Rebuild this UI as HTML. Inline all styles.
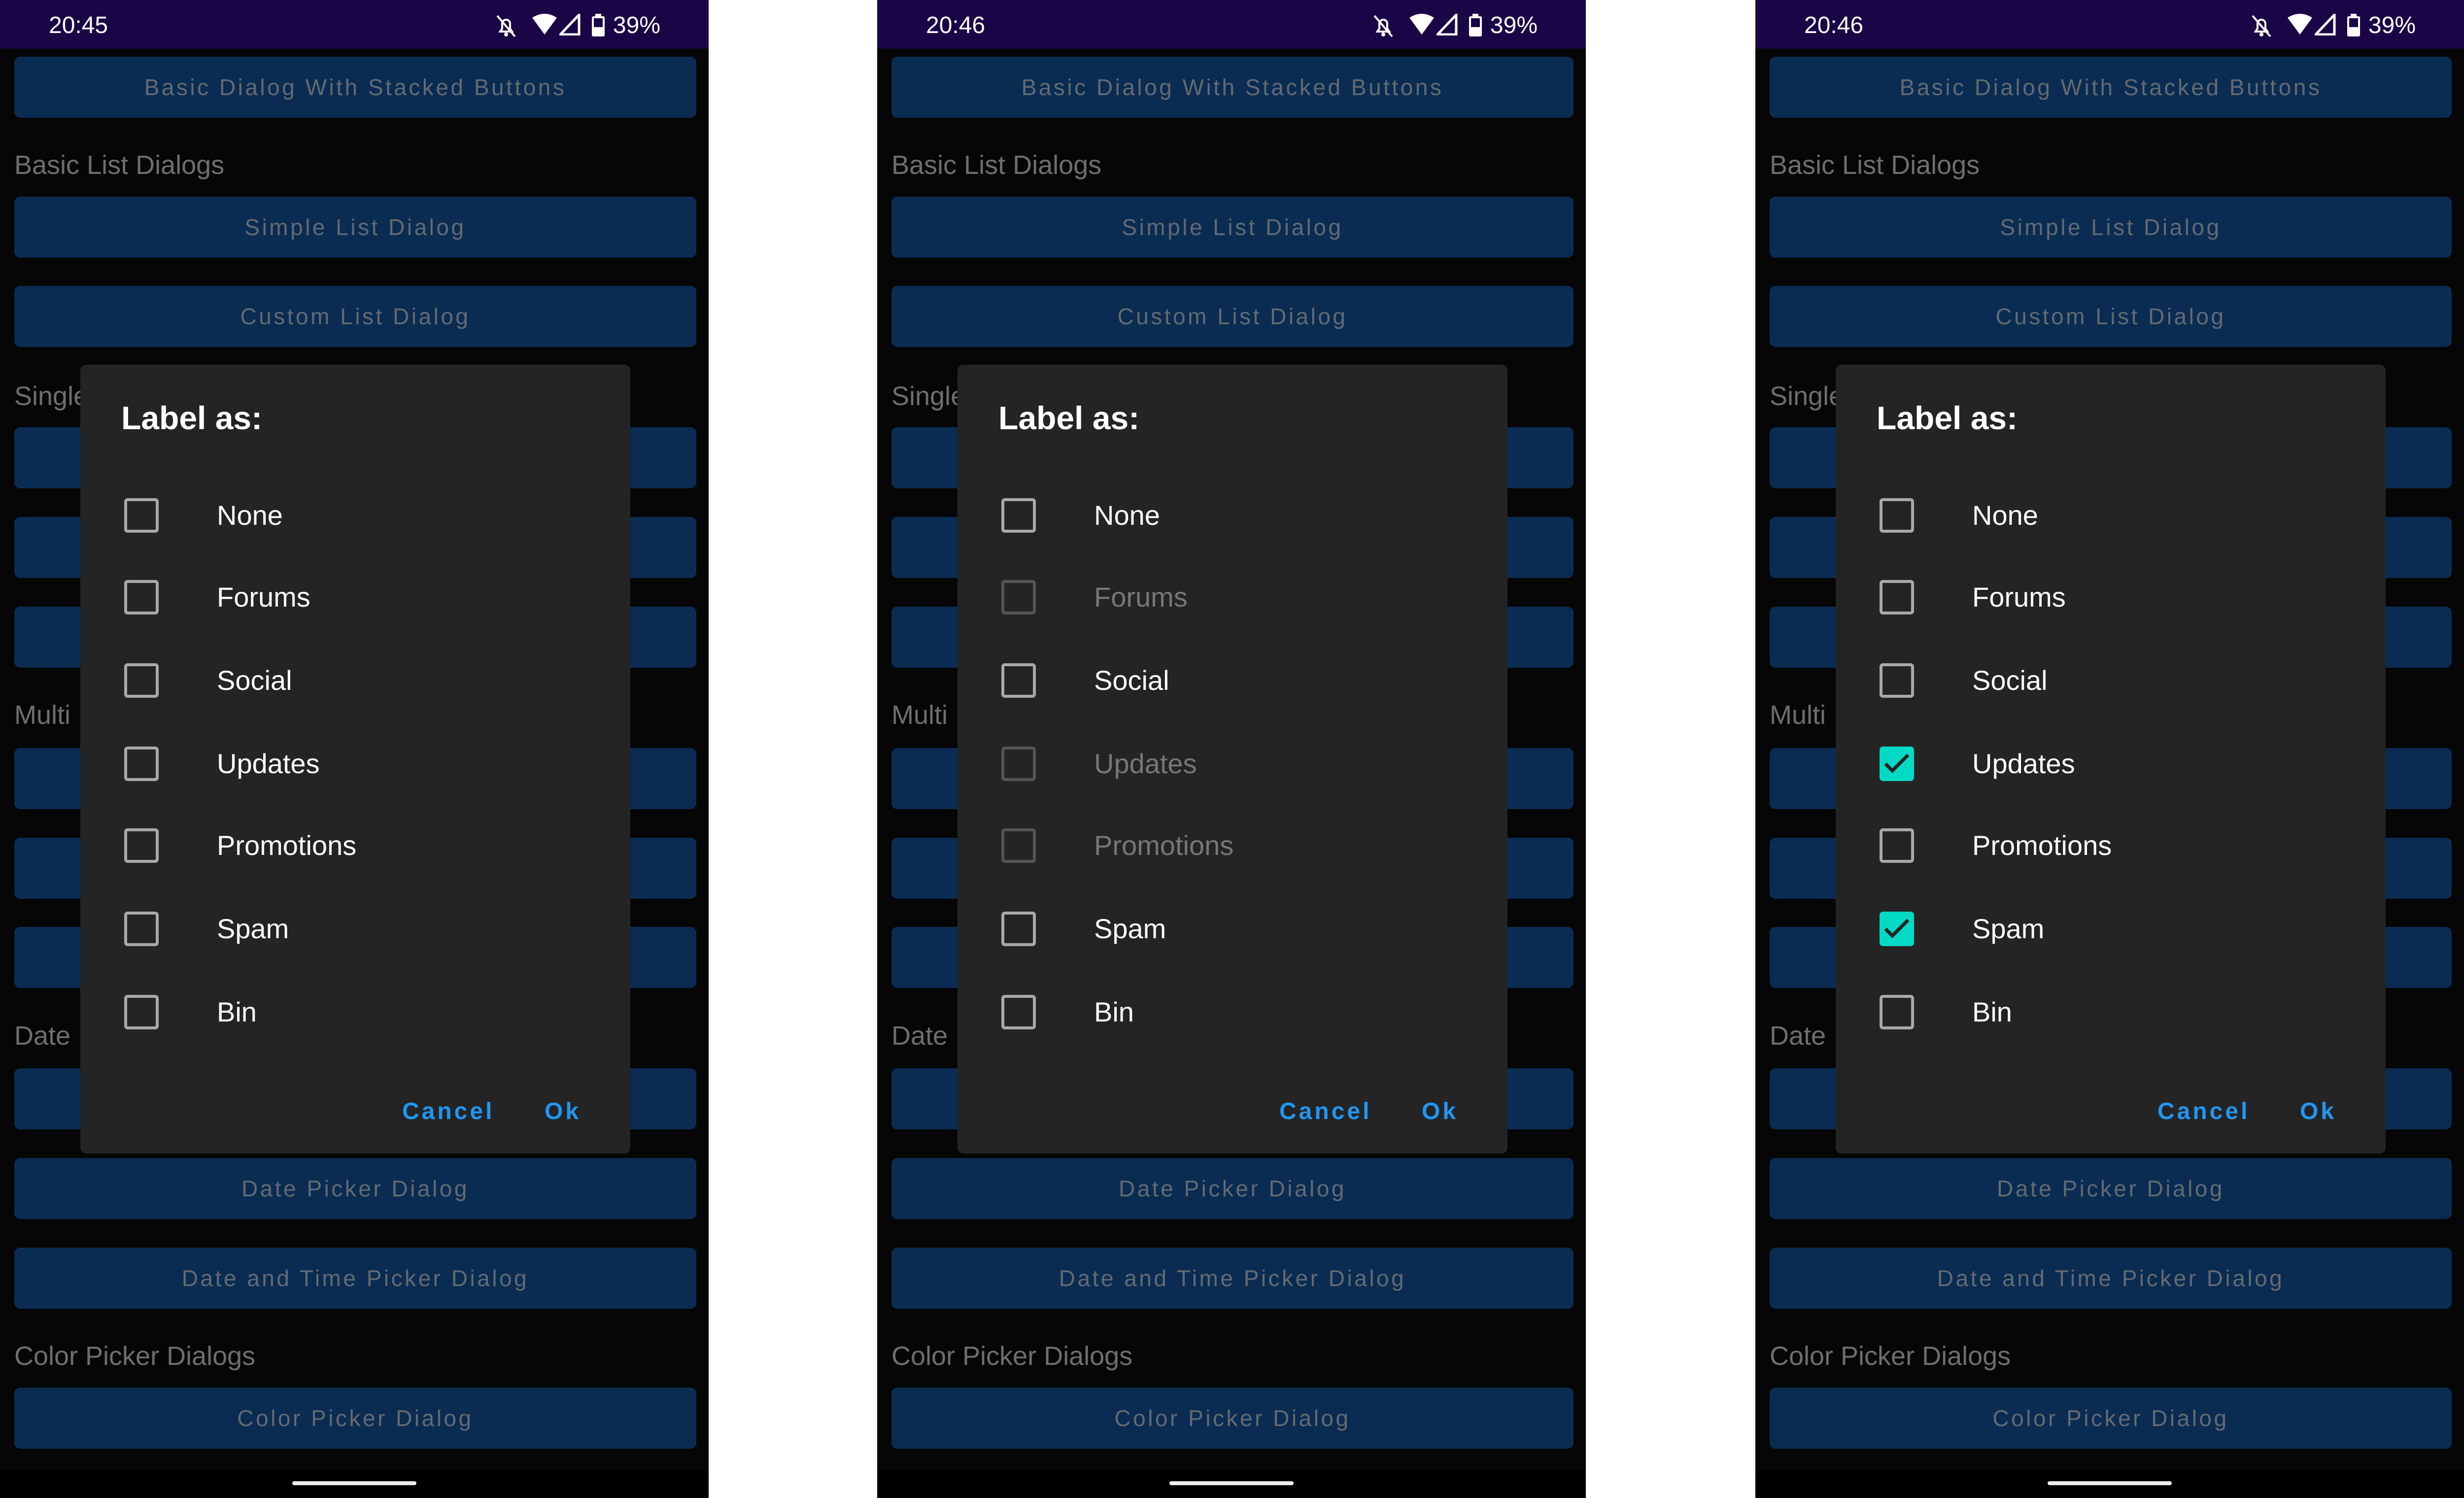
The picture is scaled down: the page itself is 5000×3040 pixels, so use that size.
<!DOCTYPE html>
<html><head><meta charset="utf-8"><style>
*{margin:0;padding:0;box-sizing:border-box}
body{width:5000px;height:3040px;background:#fff;position:relative;overflow:hidden;font-family:"Liberation Sans",sans-serif}
.ph{position:absolute;top:0;width:1438px;height:3040px;background:#060606;overflow:hidden}
.sb{position:absolute;left:0;top:0;width:100%;height:99px;background:#1a0646}
.tm{position:absolute;left:99px;top:24px;font-size:48px;color:#fff}
.pc{position:absolute;right:98px;top:24px;font-size:48px;color:#fff}
.ic{position:absolute;top:28px}
.btn{position:absolute;left:29px;width:1384px;height:124px;background:#0a2c52;border-radius:12px;color:#646a72;font-size:46px;letter-spacing:4.5px;text-align:center;line-height:124px;font-weight:500}
.lb{position:absolute;left:29px;font-size:54px;color:#6e6e6e;line-height:64px}
.nav{position:absolute;left:0;top:2982px;width:100%;height:58px;background:#000}
.hm{position:absolute;left:593px;top:3006px;width:252px;height:8px;border-radius:4px;background:#eee}
.dlg{position:absolute;left:163px;top:740px;width:1116px;height:1601px;background:#242424;border-radius:12px}
.tt{position:absolute;left:83px;top:70px;font-size:66px;color:#fff;font-weight:bold}
.it{position:absolute;left:0;width:100%;height:120px}
.cb{position:absolute;left:89px;top:25px;width:70px;height:70px;border:6px solid #a9a9a9;border-radius:7px}
.cb.d{border-color:#555}
.cb.c{background:#03dac5;border-color:#03dac5}
.tx{position:absolute;left:277px;top:30px;font-size:56px;color:#fff;line-height:60px}
.tx.d{color:#777}
.ab{position:absolute;top:1488px;font-size:48px;font-weight:bold;color:#2196f3;letter-spacing:5px}
</style></head><body>

<div class="ph" style="left:0">
<div class="sb"><div class="tm">20:45</div>
<svg class="ic" style="left:1005px" width="44" height="50" viewBox="0 0 44 50"><path d="M10 36h24l-4-6V20a8 8 0 0 0-16 0v10z" fill="none" stroke="#fff" stroke-width="4"/><path d="M4 4l36 42" stroke="#fff" stroke-width="4"/><circle cx="22" cy="42" r="4" fill="#fff"/></svg>
<svg class="ic" style="left:1080px" width="50" height="44" viewBox="0 0 50 44"><path d="M0 8Q25-8 50 8L25 42z" fill="#fff"/></svg>
<svg class="ic" style="left:1135px" width="44" height="44" viewBox="0 0 44 44"><path d="M40 2V42H2z" fill="none" stroke="#fff" stroke-width="5"/></svg>
<svg class="ic" style="left:1200px" width="28" height="46" viewBox="0 0 28 46"><rect x="1" y="5" width="26" height="41" rx="3" fill="#fff"/><rect x="8" y="0" width="12" height="6" fill="#fff"/><rect x="5" y="9" width="18" height="18" fill="#1a0646"/></svg>
<div class="pc">39%</div></div>
<div class="btn" style="top:115px">Basic Dialog With Stacked Buttons</div>
<div class="lb" style="top:303px">Basic List Dialogs</div>
<div class="btn" style="top:399px">Simple List Dialog</div>
<div class="btn" style="top:580px">Custom List Dialog</div>
<div class="lb" style="top:772px">Single</div>
<div class="btn" style="top:867px"></div><div class="btn" style="top:1049px"></div><div class="btn" style="top:1231px"></div>
<div class="lb" style="top:1419px">Multi</div>
<div class="btn" style="top:1518px"></div><div class="btn" style="top:1700px"></div><div class="btn" style="top:1881px"></div>
<div class="lb" style="top:2070px">Date</div>
<div class="btn" style="top:2168px"></div>
<div class="btn" style="top:2350px">Date Picker Dialog</div>
<div class="btn" style="top:2532px">Date and Time Picker Dialog</div>
<div class="lb" style="top:2720px">Color Picker Dialogs</div>
<div class="btn" style="top:2816px">Color Picker Dialog</div>
<div class="nav"></div><div class="hm"></div>
<div class="dlg"><div class="tt">Label as:</div>
<div class="it" style="top:246px"><div class="cb"></div><div class="tx">None</div></div>
<div class="it" style="top:412px"><div class="cb"></div><div class="tx">Forums</div></div>
<div class="it" style="top:581px"><div class="cb"></div><div class="tx">Social</div></div>
<div class="it" style="top:750px"><div class="cb"></div><div class="tx">Updates</div></div>
<div class="it" style="top:916px"><div class="cb"></div><div class="tx">Promotions</div></div>
<div class="it" style="top:1085px"><div class="cb"></div><div class="tx">Spam</div></div>
<div class="it" style="top:1254px"><div class="cb"></div><div class="tx">Bin</div></div>
<div class="ab" style="left:653px">Cancel</div><div class="ab" style="left:942px">Ok</div>
</div></div>

<div class="ph" style="left:1780px">
<div class="sb"><div class="tm">20:46</div>
<svg class="ic" style="left:1005px" width="44" height="50" viewBox="0 0 44 50"><path d="M10 36h24l-4-6V20a8 8 0 0 0-16 0v10z" fill="none" stroke="#fff" stroke-width="4"/><path d="M4 4l36 42" stroke="#fff" stroke-width="4"/><circle cx="22" cy="42" r="4" fill="#fff"/></svg>
<svg class="ic" style="left:1080px" width="50" height="44" viewBox="0 0 50 44"><path d="M0 8Q25-8 50 8L25 42z" fill="#fff"/></svg>
<svg class="ic" style="left:1135px" width="44" height="44" viewBox="0 0 44 44"><path d="M40 2V42H2z" fill="none" stroke="#fff" stroke-width="5"/></svg>
<svg class="ic" style="left:1200px" width="28" height="46" viewBox="0 0 28 46"><rect x="1" y="5" width="26" height="41" rx="3" fill="#fff"/><rect x="8" y="0" width="12" height="6" fill="#fff"/><rect x="5" y="9" width="18" height="18" fill="#1a0646"/></svg>
<div class="pc">39%</div></div>
<div class="btn" style="top:115px">Basic Dialog With Stacked Buttons</div>
<div class="lb" style="top:303px">Basic List Dialogs</div>
<div class="btn" style="top:399px">Simple List Dialog</div>
<div class="btn" style="top:580px">Custom List Dialog</div>
<div class="lb" style="top:772px">Single</div>
<div class="btn" style="top:867px"></div><div class="btn" style="top:1049px"></div><div class="btn" style="top:1231px"></div>
<div class="lb" style="top:1419px">Multi</div>
<div class="btn" style="top:1518px"></div><div class="btn" style="top:1700px"></div><div class="btn" style="top:1881px"></div>
<div class="lb" style="top:2070px">Date</div>
<div class="btn" style="top:2168px"></div>
<div class="btn" style="top:2350px">Date Picker Dialog</div>
<div class="btn" style="top:2532px">Date and Time Picker Dialog</div>
<div class="lb" style="top:2720px">Color Picker Dialogs</div>
<div class="btn" style="top:2816px">Color Picker Dialog</div>
<div class="nav"></div><div class="hm"></div>
<div class="dlg"><div class="tt">Label as:</div>
<div class="it" style="top:246px"><div class="cb"></div><div class="tx">None</div></div>
<div class="it" style="top:412px"><div class="cb d"></div><div class="tx d">Forums</div></div>
<div class="it" style="top:581px"><div class="cb"></div><div class="tx">Social</div></div>
<div class="it" style="top:750px"><div class="cb d"></div><div class="tx d">Updates</div></div>
<div class="it" style="top:916px"><div class="cb d"></div><div class="tx d">Promotions</div></div>
<div class="it" style="top:1085px"><div class="cb"></div><div class="tx">Spam</div></div>
<div class="it" style="top:1254px"><div class="cb"></div><div class="tx">Bin</div></div>
<div class="ab" style="left:653px">Cancel</div><div class="ab" style="left:942px">Ok</div>
</div></div>

<div class="ph" style="left:3562px">
<div class="sb"><div class="tm">20:46</div>
<svg class="ic" style="left:1005px" width="44" height="50" viewBox="0 0 44 50"><path d="M10 36h24l-4-6V20a8 8 0 0 0-16 0v10z" fill="none" stroke="#fff" stroke-width="4"/><path d="M4 4l36 42" stroke="#fff" stroke-width="4"/><circle cx="22" cy="42" r="4" fill="#fff"/></svg>
<svg class="ic" style="left:1080px" width="50" height="44" viewBox="0 0 50 44"><path d="M0 8Q25-8 50 8L25 42z" fill="#fff"/></svg>
<svg class="ic" style="left:1135px" width="44" height="44" viewBox="0 0 44 44"><path d="M40 2V42H2z" fill="none" stroke="#fff" stroke-width="5"/></svg>
<svg class="ic" style="left:1200px" width="28" height="46" viewBox="0 0 28 46"><rect x="1" y="5" width="26" height="41" rx="3" fill="#fff"/><rect x="8" y="0" width="12" height="6" fill="#fff"/><rect x="5" y="9" width="18" height="18" fill="#1a0646"/></svg>
<div class="pc">39%</div></div>
<div class="btn" style="top:115px">Basic Dialog With Stacked Buttons</div>
<div class="lb" style="top:303px">Basic List Dialogs</div>
<div class="btn" style="top:399px">Simple List Dialog</div>
<div class="btn" style="top:580px">Custom List Dialog</div>
<div class="lb" style="top:772px">Single</div>
<div class="btn" style="top:867px"></div><div class="btn" style="top:1049px"></div><div class="btn" style="top:1231px"></div>
<div class="lb" style="top:1419px">Multi</div>
<div class="btn" style="top:1518px"></div><div class="btn" style="top:1700px"></div><div class="btn" style="top:1881px"></div>
<div class="lb" style="top:2070px">Date</div>
<div class="btn" style="top:2168px"></div>
<div class="btn" style="top:2350px">Date Picker Dialog</div>
<div class="btn" style="top:2532px">Date and Time Picker Dialog</div>
<div class="lb" style="top:2720px">Color Picker Dialogs</div>
<div class="btn" style="top:2816px">Color Picker Dialog</div>
<div class="nav"></div><div class="hm"></div>
<div class="dlg"><div class="tt">Label as:</div>
<div class="it" style="top:246px"><div class="cb"></div><div class="tx">None</div></div>
<div class="it" style="top:412px"><div class="cb"></div><div class="tx">Forums</div></div>
<div class="it" style="top:581px"><div class="cb"></div><div class="tx">Social</div></div>
<div class="it" style="top:750px"><div class="cb c"><svg width="58" height="58" viewBox="0 0 58 58" style="position:absolute;left:0;top:0"><path d="M6 29l14 14 32-32" fill="none" stroke="#222" stroke-width="7"/></svg></div><div class="tx">Updates</div></div>
<div class="it" style="top:916px"><div class="cb"></div><div class="tx">Promotions</div></div>
<div class="it" style="top:1085px"><div class="cb c"><svg width="58" height="58" viewBox="0 0 58 58" style="position:absolute;left:0;top:0"><path d="M6 29l14 14 32-32" fill="none" stroke="#222" stroke-width="7"/></svg></div><div class="tx">Spam</div></div>
<div class="it" style="top:1254px"><div class="cb"></div><div class="tx">Bin</div></div>
<div class="ab" style="left:653px">Cancel</div><div class="ab" style="left:942px">Ok</div>
</div></div>
</body></html>
